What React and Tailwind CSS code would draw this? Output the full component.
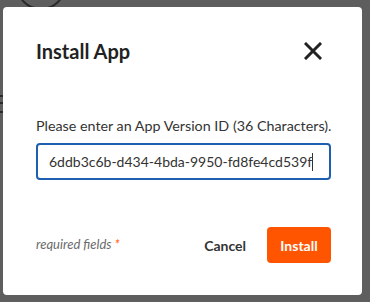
export default function App() {
    return (
        <div className="relative w-[370px] h-[302px] overflow-hidden bg-[#5e5e5e]" style={{ fontFamily: 'Lato, "Open Sans", sans-serif' }}>
            {/* background page bits peeking out */}
            <div className="absolute left-[16px] top-[-40px] w-[50px] h-[50px] rounded-full border-2 border-[#2a2a2a]"></div>
            <div className="absolute left-0 top-[95px] w-[3px] h-[2px] bg-[#2a2a2a]"></div>
            <div className="absolute left-0 top-[102px] w-[3px] h-[2px] bg-[#2a2a2a]"></div>
            <div className="absolute left-0 top-[111px] w-[3px] h-[2px] bg-[#2a2a2a]"></div>

            <div className="absolute left-[3px] top-[7px] w-[359px] h-[288px] bg-white rounded-[4px] flex flex-col pl-[33px] pr-[31px]">
                <div className="flex items-center justify-between mt-[30px] h-[28px]">
                    <span className="text-[20px] font-bold text-[#222]">Install App</span>
                    <button className="mr-[9px] text-[#222]">
                        <svg width="18" height="18" viewBox="0 0 18 18">
                            <path d="M2 2 L16 16 M16 2 L2 16" stroke="#222" strokeWidth="3" strokeLinecap="square" />
                        </svg>
                    </button>
                </div>

                <p className="mt-[51px] text-[14.3px] text-[#333] leading-[20px] whitespace-nowrap">Please enter an App Version ID (36 Characters).</p>

                <div className="mt-[7px] h-[37px] w-full border-2 border-[#1f5fb0] rounded-[4px] flex items-center pl-[11px] overflow-hidden">
                    <span className="text-[14px] text-[#333] whitespace-nowrap">6ddb3c6b-d434-4bda-9950-fd8fe4cd539f</span>
                    <span className="w-px h-[18px] bg-[#333]"></span>
                </div>

                <div className="mt-[47px] flex items-center">
                    <span className="text-[13px] italic text-[#6a6a6a]">required fields <span className="text-[#ff5a00]">*</span></span>
                    <button className="ml-auto text-[14px] font-bold text-[#333]">Cancel</button>
                    <button className="ml-[21px] w-[64px] h-[36px] rounded-[4px] bg-[#ff5500] text-white text-[14px] font-bold">Install</button>
                </div>
            </div>
        </div>
    )
}
